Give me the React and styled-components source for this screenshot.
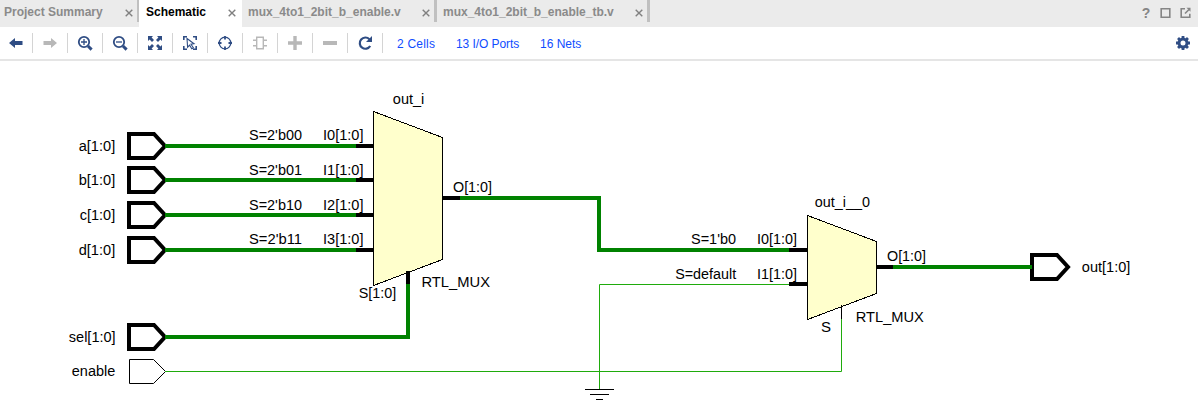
import React from 'react';
import styled, { createGlobalStyle } from 'styled-components';

const GlobalStyle = createGlobalStyle`
  * { box-sizing: border-box; }
  body { margin: 0; background: #fff; font-family: "Liberation Sans", Arial, sans-serif; }
`;

const Window = styled.main`
  width: 1198px;
  height: 409px;
  display: flex;
  flex-direction: column;
  overflow: hidden;
  background: #fff;
`;

const TabBar = styled.header`
  display: flex;
  height: 27px;
  background: #ebebeb;
`;

const Tab = styled.div`
  display: flex;
  align-items: flex-start;
  justify-content: space-between;
  width: ${(p) => p.$width}px;
  padding: 5px ${(p) => p.$right}px 0 ${(p) => p.$left}px;
  background: ${(p) => (p.$active ? '#fff' : '#ebebeb')};
  color: ${(p) => (p.$active ? '#000' : '#8a8a8a')};
  font-size: 12px;
  line-height: 14px;
  font-weight: bold;
  white-space: nowrap;
`;

const TabDivider = styled.div`
  width: ${(p) => p.$width || 3}px;
  height: 22px;
  background: #c0c0c0;
`;

const CloseIcon = styled.svg`
  width: 8px;
  height: 8px;
  margin-top: 4px;
  flex: none;
`;

const WindowActions = styled.div`
  display: flex;
  align-items: flex-start;
  gap: 9px;
  margin-left: auto;
  padding: 7px 7px 0 0;
`;

const HelpMark = styled.span`
  width: 10px;
  color: #858585;
  font-size: 14px;
  font-weight: bold;
  line-height: 13px;
  text-align: center;
`;

const ActionIcon = styled.svg`
  width: 11px;
  height: 11px;
`;

const Toolbar = styled.nav`
  display: flex;
  align-items: center;
  height: 34px;
  border-bottom: 2px solid #e5e5e5;
`;

const ToolButton = styled.div`
  display: flex;
  align-items: center;
  justify-content: center;
  width: ${(p) => (p.$first ? 33 : 35)}px;
  height: 20px;
  padding-right: ${(p) => (p.$first ? 1 : 0)}px;
  border-right: 1px solid #d4d4d4;
  color: ${(p) => (p.$disabled ? '#b8b8b8' : '#2f4d84')};
`;

const ToolIcon = styled.svg`
  width: 16px;
  height: 16px;
  display: block;
`;

const Links = styled.div`
  display: flex;
  gap: 21px;
  padding: 2px 0 0 14px;
  color: #0f4cff;
  font-size: 12px;
  line-height: 14px;
`;

const Link = styled.span`
  width: ${(p) => p.$width}px;
  letter-spacing: ${(p) => p.$spacing}px;
  white-space: nowrap;
`;

const Settings = styled.div`
  margin-left: auto;
  padding-right: 7px;
  color: #2f4d84;
`;

const Canvas = styled.svg`
  display: block;
  width: 1198px;
  height: 348px;
`;

const Label = styled.text`
  font-family: "Liberation Sans", Arial, sans-serif;
  font-size: 14px;
  fill: #000;
`;

const Bus = styled.path`
  fill: none;
  stroke: ${(p) => (p.$pin ? '#000' : '#008200')};
  stroke-width: 4;
`;

const Wire = styled.path`
  fill: none;
  stroke: ${(p) => (p.$pin ? '#000' : '#1fab0c')};
  stroke-width: 1;
`;

const PortShape = styled.path`
  fill: #fff;
  stroke: #000;
  stroke-width: ${(p) => (p.$thin ? 1 : 4)};
`;

const MuxShape = styled.path`
  fill: #ffffcc;
  stroke: #000;
  stroke-width: 1;
`;

const Close = () => (
  <CloseIcon viewBox="0 0 8 8">
    <path d="M.7.7 7.3 7.3M7.3.7.7 7.3" stroke="#808080" strokeWidth="1.4" />
  </CloseIcon>
);

const icons = {
  back: <path d="M1 8 7 3v3h7.5v4H7v3z" fill="currentColor" />,
  forward: <path d="M15 8 9 3v3H1.5v4H9v3z" fill="currentColor" />,
  zoomIn: (
    <g fill="none" stroke="currentColor">
      <circle cx="7" cy="7" r="5.2" strokeWidth="1.8" />
      <path d="M4 7h6M7 4v6" strokeWidth="1.3" />
      <path d="m11 11 3.6 3.6" strokeWidth="3" />
    </g>
  ),
  zoomOut: (
    <g fill="none" stroke="currentColor">
      <circle cx="7" cy="7" r="5.2" strokeWidth="1.8" />
      <path d="M4 7h6" strokeWidth="1.3" />
      <path d="m11 11 3.6 3.6" strokeWidth="3" />
    </g>
  ),
  fit: (
    <g fill="currentColor">
      <path d="M1 1h5L4.6 2.6 7 5 5 7 2.6 4.6 1 6zM15 1h-5l1.4 1.6L9 5l2 2 2.4-2.4L15 6zM1 15h5l-1.4-1.6L7 11 5 9l-2.4 2.4L1 10zM15 15h-5l1.4-1.6L9 11l2-2 2.4 2.4L15 10z" />
    </g>
  ),
  select: (
    <g fill="none" stroke="currentColor">
      <path d="M1.8 5V1.8H5M11 1.8h3.2V5M14.2 11v3.2H11M5 14.2H1.8V11" strokeWidth="1.6" />
      <path d="m5 3.5 7 5.2-3 .5 2.4 3.6-1.6 1-2.2-3.7-2 2.1z" strokeWidth="1.1" />
    </g>
  ),
  target: (
    <g fill="none" stroke="currentColor">
      <circle cx="8" cy="8" r="5.8" strokeWidth="1.3" />
      <path d="M8 1v3.5M8 11.5V15M1 8h3.5M11.5 8H15" strokeWidth="1.8" />
    </g>
  ),
  chip: (
    <g fill="none" stroke="currentColor" strokeWidth="1.4">
      <path d="M4.7 2.2h6.6v11.6H4.7zM1 5.2h3M1 10.8h3M12 5.2h3M12 10.8h3" />
    </g>
  ),
  plus: <path d="M1 8h14M8 1v14" stroke="currentColor" strokeWidth="3.4" />,
  minus: <path d="M1 8h14" stroke="currentColor" strokeWidth="4" />,
  refresh: (
    <g>
      <path d="M12.4 4.2A5.6 5.6 0 1 0 13.2 11" fill="none" stroke="currentColor" strokeWidth="2.2" />
      <path d="M15 1v6H9z" fill="currentColor" />
    </g>
  ),
  gear: (
    <g fill="none" stroke="currentColor">
      <circle cx="8" cy="8" r="4" strokeWidth="3" />
      <path
        d="M8 1v2M8 13v2M1 8h2M13 8h2M3.05 3.05l1.4 1.4M11.55 11.55l1.4 1.4M3.05 12.95l1.4-1.4M11.55 4.45l1.4-1.4"
        strokeWidth="2.8"
      />
    </g>
  ),
};

const tools = [
  ['back'], ['forward', true], ['zoomIn'], ['zoomOut'], ['fit'], ['select'],
  ['target'], ['chip', true], ['plus', true], ['minus', true], ['refresh'],
];

const Icon = ({ name }) => <ToolIcon viewBox="0 0 16 16">{icons[name]}</ToolIcon>;

const inputs = [
  { y: 146, name: 'a[1:0]', x: 79, select: "S=2'b00", pin: 'I0[1:0]', ly: 140 },
  { y: 180, name: 'b[1:0]', x: 79, select: "S=2'b01", pin: 'I1[1:0]', ly: 175 },
  { y: 215, name: 'c[1:0]', x: 80, select: "S=2'b10", pin: 'I2[1:0]', ly: 210 },
  { y: 250, name: 'd[1:0]', x: 79, select: "S=2'b11", pin: 'I3[1:0]', ly: 244 },
];

const Port = ({ x, y }) => <PortShape d={`M${x} ${y - 12}h25l11 12-11 12h-25z`} />;

const T = ({ x, y, w, children }) => (
  <Label x={x} y={y} textLength={w} lengthAdjust="spacingAndGlyphs">{children}</Label>
);

const Schematic = () => (
  <Canvas viewBox="0 61 1198 348">
    {inputs.map((i) => (
      <g key={i.name}>
        <T x={i.x - 0.3} y={i.y + 5} w={115.5 - i.x}>{i.name}</T>
        <T x={249} y={i.ly} w={53}>{i.select}</T>
        <T x={323} y={i.ly} w={40.5}>{i.pin}</T>
        <Port x={129} y={i.y} />
        <Bus d={`M165 ${i.y}H356`} />
        <Bus $pin d={`M356 ${i.y}H373`} />
      </g>
    ))}

    <Port x={129} y={337} />
    <T x={68.8} y={342} w={46.8}>sel[1:0]</T>
    <Bus d="M165 337H408V284" />
    <PortShape $thin d="M129.5 359.5h24l12 12-12 12h-24z" />
    <T x={71.8} y={376} w={43.5}>enable</T>
    <Wire d="M165 371.5H841.5V319" />

    <MuxShape d="M373.5 111.5 442.5 137.5V259.5L373.5 285.5Z" shapeRendering="crispEdges" />
    <Bus $pin d="M408 271V284M443 198H460" />
    <T x={392.8} y={104} w={31.5}>out_i</T>
    <T x={358.8} y={298} w={37.5}>S[1:0]</T>
    <T x={421.5} y={287} w={68.5}>RTL_MUX</T>
    <T x={453} y={192} w={39}>O[1:0]</T>

    <Bus d="M460 198H599V250H789" />
    <Wire d="M599.5 389V284.5H790" />
    <Wire $pin d="M585 389.5h29M590 394.5h19M596 399.5h7" />

    <MuxShape d="M807.5 215.5 876.5 241.5V293.5L807.5 319.5Z" shapeRendering="crispEdges" />
    <Wire $pin d="M841.5 305V319" />
    <T x={814.8} y={207} w={55.2}>out_i__0</T>
    <T x={691} y={244} w={45}>S=1&apos;b0</T>
    <T x={757} y={244} w={40}>I0[1:0]</T>
    <T x={675.2} y={279} w={61}>S=default</T>
    <T x={757} y={279} w={40}>I1[1:0]</T>
    <T x={887} y={261} w={39}>O[1:0]</T>
    <T x={821} y={332} w={10}>S</T>
    <T x={855.8} y={322} w={68}>RTL_MUX</T>
    <Bus $pin d="M789 250H807M789 284H807M877 267H893" />

    <PortShape d="M1032 255h25l11 12-11 12h-25z" />
    <Bus d="M893 267H1032" />
    <T x={1081.8} y={272} w={48.5}>out[1:0]</T>
  </Canvas>
);

export default function App() {
  return (
    <Window>
      <GlobalStyle />
      <TabBar>
        <Tab $width={137} $left={4} $right={4}>Project Summary<Close /></Tab>
        <TabDivider $width={2} />
        <Tab $width={103} $left={7} $right={6} $active>Schematic<Close /></Tab>
        <Tab $width={192} $left={6} $right={4}>mux_4to1_2bit_b_enable.v<Close /></Tab>
        <TabDivider />
        <Tab $width={210} $left={6} $right={4}>mux_4to1_2bit_b_enable_tb.v<Close /></Tab>
        <TabDivider />
        <WindowActions>
          <HelpMark>?</HelpMark>
          <ActionIcon viewBox="0 0 11 11">
            <path d="M1.2 1.7h8.6v8.6H1.2z" fill="none" stroke="#858585" strokeWidth="1.6" />
          </ActionIcon>
          <ActionIcon viewBox="0 0 11 11">
            <path d="M5 1.7H1.2v8.6h8.6V6.8M5 6.5l4-4" fill="none" stroke="#858585" strokeWidth="1.6" />
            <path d="M6.5.8h4v4z" fill="#858585" />
          </ActionIcon>
        </WindowActions>
      </TabBar>
      <Toolbar>
        {tools.map(([name, disabled], i) => (
          <ToolButton key={name} $first={i === 0} $disabled={disabled}><Icon name={name} /></ToolButton>
        ))}
        <Links>
          <Link $width={38} $spacing={0.2}>2 Cells</Link>
          <Link $width={63} $spacing={-0.08}>13 I/O Ports</Link>
          <Link $width={42} $spacing={0}>16 Nets</Link>
        </Links>
        <Settings><Icon name="gear" /></Settings>
      </Toolbar>
      <Schematic />
    </Window>
  );
}
